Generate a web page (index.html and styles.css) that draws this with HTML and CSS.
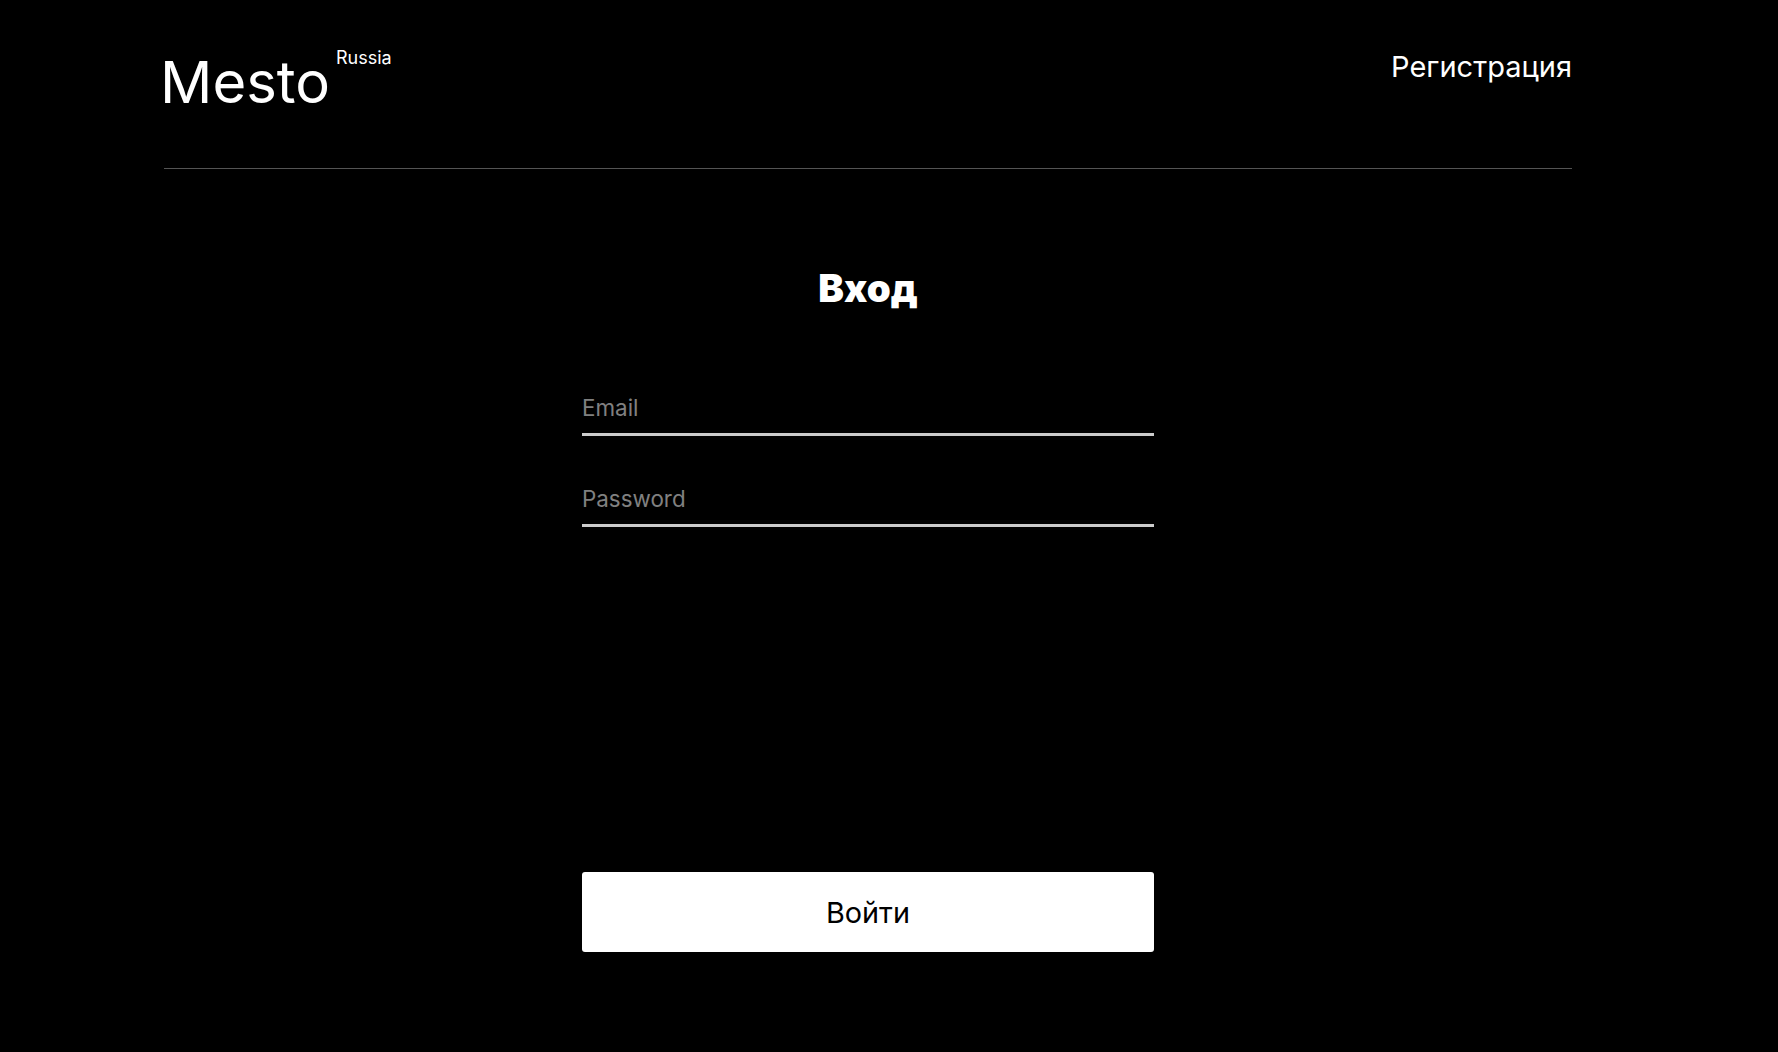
FILE: index.html
```html
<!DOCTYPE html>
<html lang="ru">
<head>
<meta charset="utf-8">
<title>Mesto</title>
<link rel="stylesheet" href="styles.css">
</head>
<body>
<div class="page">
  <header class="header">
    <div class="logo">
      <span class="logo__main">Mesto</span>
      <span class="logo__sub">Russia</span>
    </div>
    <a class="header__link" href="#">Регистрация</a>
  </header>
  <main class="auth">
    <h1 class="auth__title">Вход</h1>
    <form class="auth__form">
      <input class="auth__input" type="email" placeholder="Email">
      <input class="auth__input" type="password" placeholder="Password">
      <button class="auth__button" type="button">Войти</button>
    </form>
  </main>
</div>
</body>
</html>
```

FILE: styles.css
```css
html, body {
  margin: 0;
  padding: 0;
  background: #000;
  color: #fff;
  font-family: Inter, "Noto Sans", sans-serif;
}

.page {
  width: 1408px;
  margin: 0 0 0 164px;
}

.header {
  display: flex;
  justify-content: space-between;
  align-items: flex-start;
  padding: 47px 0 57px;
  border-bottom: 1px solid #545454;
}

.logo {
  display: flex;
  align-items: flex-start;
  margin-left: -4px;
}

.logo__main {
  font-size: 58px;
  line-height: 57px;
  margin-top: 7px;
  font-weight: 400;
}

.logo__sub {
  font-size: 18px;
  line-height: 22px;
  margin-left: 6px;
}

.header__link {
  color: #fff;
  text-decoration: none;
  font-size: 29px;
  line-height: 35px;
  margin-top: 2px;
}

.auth {
  display: flex;
  flex-direction: column;
  align-items: center;
}

.auth__title {
  margin: 96px 0 83px;
  font-size: 38.4px;
  line-height: 46px;
  font-weight: 900;
}

.auth__form {
  width: 572px;
  display: flex;
  flex-direction: column;
}

.auth__input {
  background: transparent;
  border: none;
  border-bottom: 3px solid #ccc;
  color: #fff;
  font-family: inherit;
  font-size: 22.4px;
  line-height: 27px;
  height: 42px;
  padding: 0 0 12px;
  margin: 0;
  outline: none;
  box-sizing: border-box;
}

.auth__input + .auth__input {
  margin-top: 49px;
}

.auth__input::placeholder {
  color: #808080;
}

.auth__button {
  margin-top: 345px;
  height: 80px;
  border: none;
  border-radius: 3px;
  background: #fff;
  color: #000;
  font-family: inherit;
  font-size: 28.8px;
  cursor: pointer;
}
```
